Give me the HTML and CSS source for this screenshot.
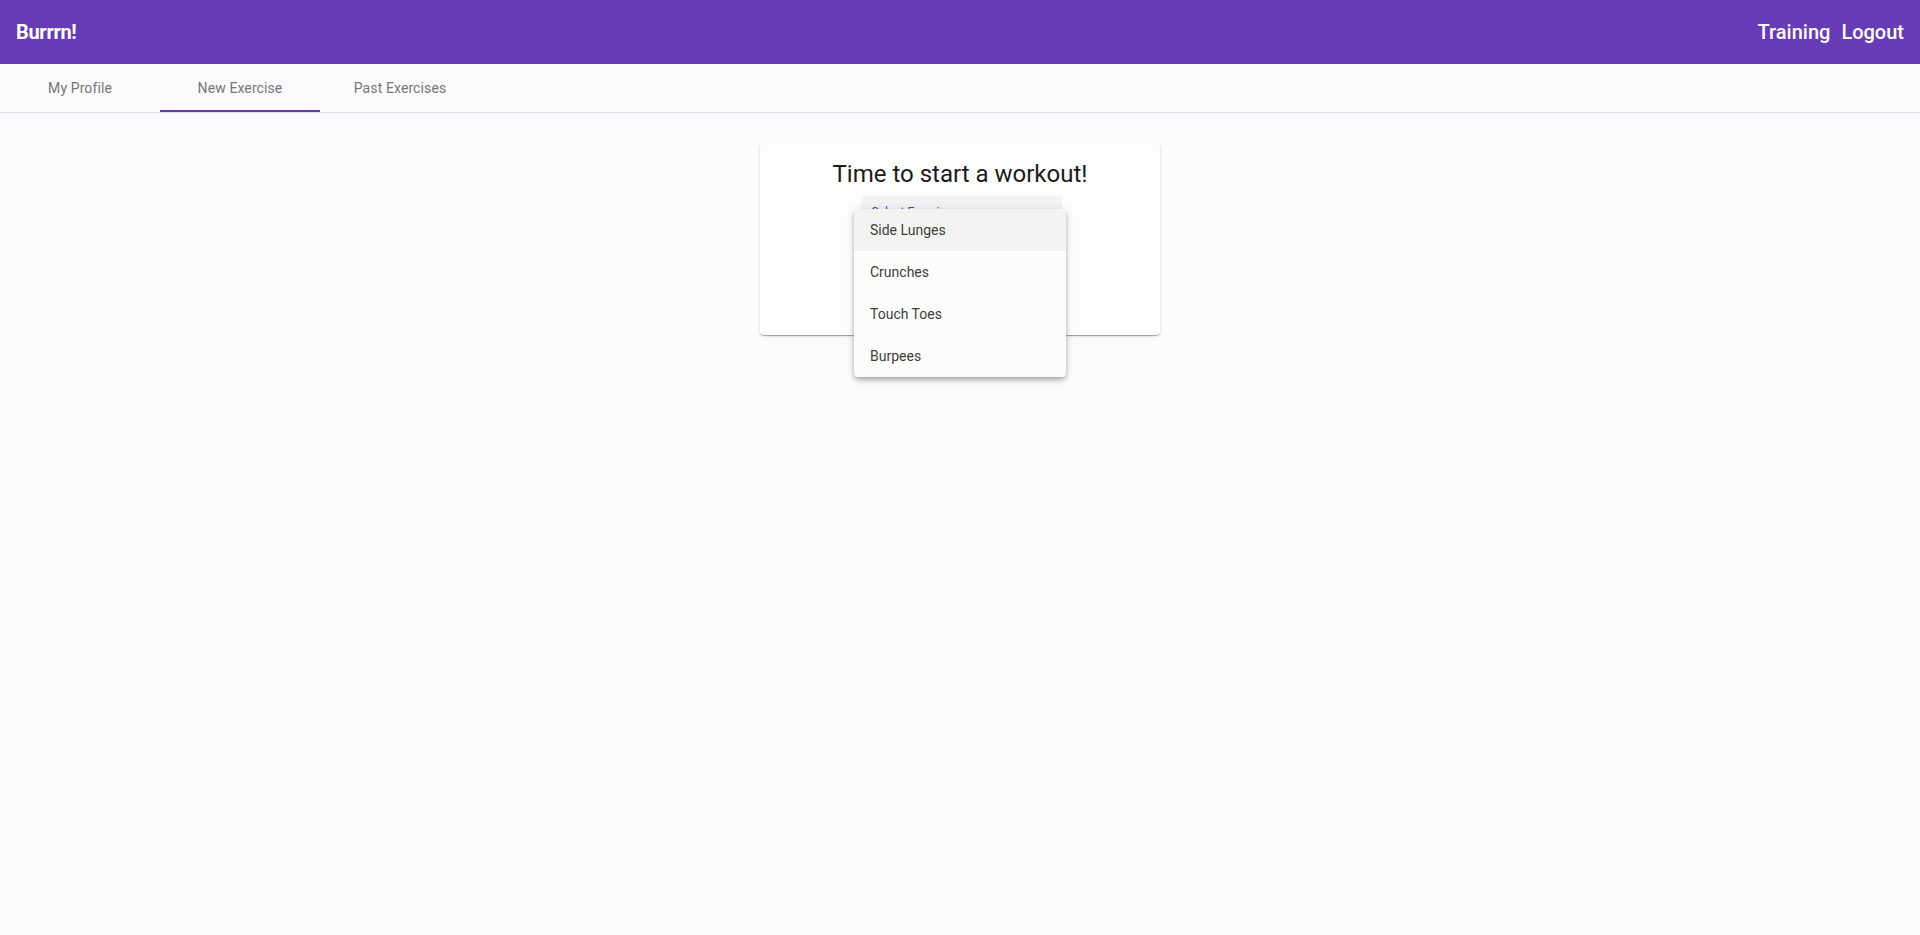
FILE: index.html
```html
<!DOCTYPE html>
<html lang="en">
<head>
<meta charset="utf-8">
<title>Burrrn!</title>
<link rel="stylesheet" href="styles.css">
</head>
<body>
<header class="toolbar">
  <div class="brand">Burrrn!</div>
  <nav class="nav">
    <a class="nav-link">Training</a>
    <a class="nav-link">Logout</a>
  </nav>
</header>
<div class="tabs">
  <div class="tab">My Profile</div>
  <div class="tab active">New Exercise</div>
  <div class="tab">Past Exercises</div>
</div>
<main class="content">
  <section class="card">
    <h1 class="card-title">Time to start a workout!</h1>
    <div class="field">
      <span class="field-label">Select Exercise</span>
    </div>
    <div class="card-actions"></div>
  </section>
</main>
<div class="menu">
  <div class="option highlighted">Side Lunges</div>
  <div class="option">Crunches</div>
  <div class="option">Touch Toes</div>
  <div class="option">Burpees</div>
</div>
</body>
</html>
```
FILE: styles.css
```css
* { box-sizing: border-box; }
html, body { margin: 0; padding: 0; }
body {
  font-family: Roboto, "Liberation Sans", sans-serif;
  background: #fcfafd;
  min-height: 935px;
  color: #1c1b1f;
}
.toolbar {
  height: 64px;
  background: #673ab7;
  color: #fff;
  display: flex;
  align-items: center;
  justify-content: space-between;
  padding: 0 16px 0 16px;
}
.brand {
  font-size: 20px;
  font-weight: 700;
  letter-spacing: -0.3px;
}
.nav { display: flex; gap: 11px; }
.nav-link {
  font-size: 20px;
  font-weight: 500;
  color: #fff;
}
.tabs {
  display: flex;
  height: 49px;
  border-bottom: 1px solid #e0dfe3;
}
.tab {
  width: 160px;
  display: flex;
  align-items: center;
  justify-content: center;
  font-size: 14px;
  color: #767676;
  letter-spacing: 0.1px;
}
.tab.active {
  box-shadow: inset 0 -2px 0 #673ab7;
}
.content {
  display: flex;
  justify-content: center;
  padding-top: 30px;
}
.card {
  width: 400px;
  background: #fdfefc;
  border-radius: 4px;
  box-shadow: 0 2px 1px -1px rgba(0,0,0,.2), 0 1px 1px 0 rgba(0,0,0,.14), 0 1px 3px 0 rgba(0,0,0,.12);
  padding: 15px 16px 0;
  display: flex;
  flex-direction: column;
  align-items: center;
}
.card-title {
  margin: 0;
  font-size: 24px;
  font-weight: 400;
  line-height: 32px;
  color: #1c1b1f;
}
.field {
  margin-top: 6px;
  width: 201px;
  height: 56px;
  background: #f3f3f3;
  border-radius: 4px 4px 0 0;
  padding: 8px 11px;
  margin-right: -2px;
  line-height: 14px;
}
.field-label {
  font-size: 12px;
  color: #5c2bd0;
}
.card-actions { height: 83px; }
.menu {
  position: absolute;
  left: 854px;
  top: 209px;
  width: 212px;
  background: #fcfdfb;
  border-radius: 4px;
  box-shadow: 0 2px 4px -1px rgba(0,0,0,.2), 0 4px 5px 0 rgba(0,0,0,.14), 0 1px 10px 0 rgba(0,0,0,.12);
  overflow: hidden;
}
.option {
  height: 42px;
  display: flex;
  align-items: center;
  padding: 0 16px;
  font-size: 14px;
  color: #3d3d3d;
}
.option.highlighted { background: #f3f4f2; }
```
